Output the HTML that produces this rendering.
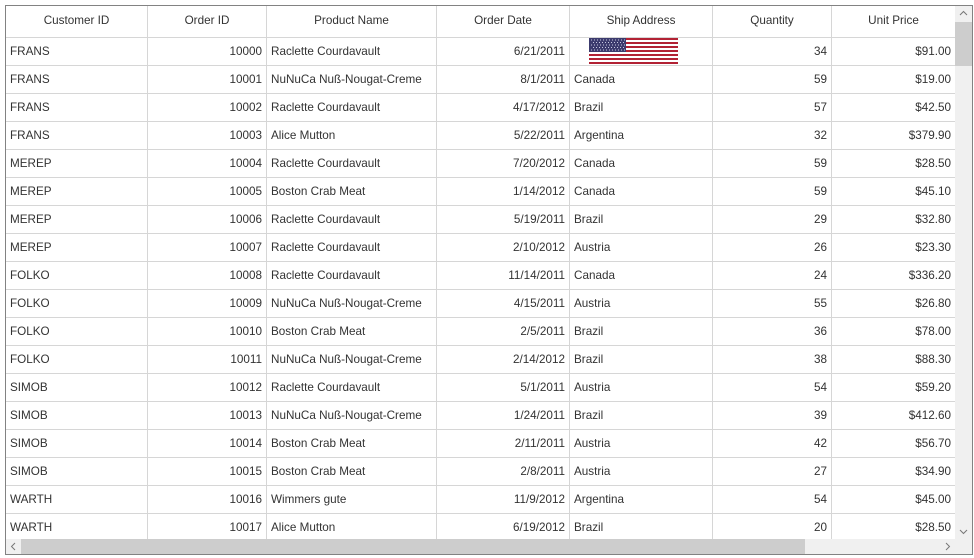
<!DOCTYPE html>
<html><head><style>
body{margin:0;background:#fff;width:974px;height:558px;overflow:hidden;font-family:"Segoe UI","Liberation Sans",sans-serif;font-size:11.7px;color:#333}
#box{position:absolute;left:5px;top:5px;width:966px;height:548px;border:1px solid #828282;overflow:hidden}
.c{position:absolute;height:28px;line-height:27px;white-space:nowrap;overflow:hidden;box-sizing:border-box;border-right:1px solid #d6d6d6;border-bottom:1px solid #d6d6d6;padding:0 4px}
.h{height:32px;line-height:30px;text-align:center}
.r{text-align:right}
#vs{position:absolute;left:949px;top:0;width:17px;height:533px;background:#f0f0f0}
#hs{position:absolute;left:0;top:533px;width:949px;height:15px;background:#f0f0f0}
#corner{position:absolute;left:949px;top:533px;width:17px;height:15px;background:#f0f0f0}
.ar{position:absolute}
</style></head><body><div id="box">
<div id="g"></div>
<div id="vs"><div style="position:absolute;left:0;top:16px;width:17px;height:44px;background:#cdcdcd"></div>
<svg class="ar" style="left:4px;top:4px" width="9" height="6"><path d="M1 5L4.5 1.5L8 5" fill="none" stroke="#777"/></svg>
<svg class="ar" style="left:4px;bottom:4px" width="9" height="6"><path d="M1 1L4.5 4.5L8 1" fill="none" stroke="#777"/></svg></div>
<div id="hs"><div style="position:absolute;left:15px;top:0;width:784px;height:15px;background:#cdcdcd"></div>
<svg class="ar" style="left:4px;top:3px" width="6" height="9"><path d="M5 1L1.5 4.5L5 8" fill="none" stroke="#777"/></svg>
<svg class="ar" style="left:939px;top:3px" width="6" height="9"><path d="M1 1L4.5 4.5L1 8" fill="none" stroke="#777"/></svg></div>
<div id="corner"></div>
</div>
<script>
var X=[0,142,261,431,564,707,826,950];
var H=["Customer ID","Order ID","Product Name","Order Date","Ship Address","Quantity","Unit Price"];
var R="FRANS 10000 Raclette Courdavault 6/21/2011 - 34 $91.00|FRANS 10001 NuNuCa Nuß-Nougat-Creme 8/1/2011 Canada 59 $19.00|FRANS 10002 Raclette Courdavault 4/17/2012 Brazil 57 $42.50|FRANS 10003 Alice Mutton 5/22/2011 Argentina 32 $379.90|MEREP 10004 Raclette Courdavault 7/20/2012 Canada 59 $28.50|MEREP 10005 Boston Crab Meat 1/14/2012 Canada 59 $45.10|MEREP 10006 Raclette Courdavault 5/19/2011 Brazil 29 $32.80|MEREP 10007 Raclette Courdavault 2/10/2012 Austria 26 $23.30|FOLKO 10008 Raclette Courdavault 11/14/2011 Canada 24 $336.20|FOLKO 10009 NuNuCa Nuß-Nougat-Creme 4/15/2011 Austria 55 $26.80|FOLKO 10010 Boston Crab Meat 2/5/2011 Brazil 36 $78.00|FOLKO 10011 NuNuCa Nuß-Nougat-Creme 2/14/2012 Brazil 38 $88.30|SIMOB 10012 Raclette Courdavault 5/1/2011 Austria 54 $59.20|SIMOB 10013 NuNuCa Nuß-Nougat-Creme 1/24/2011 Brazil 39 $412.60|SIMOB 10014 Boston Crab Meat 2/11/2011 Austria 42 $56.70|SIMOB 10015 Boston Crab Meat 2/8/2011 Austria 27 $34.90|WARTH 10016 Wimmers gute 11/9/2012 Argentina 54 $45.00|WARTH 10017 Alice Mutton 6/19/2012 Brazil 20 $28.50".split("|");
var s="";
for(var j=0;j<7;j++)s+='<div class="c h" style="left:'+X[j]+'px;top:0;width:'+(X[j+1]-X[j])+'px">'+H[j]+'</div>';
var fl='<svg width="89" height="26" style="position:absolute;left:19px;top:0" viewBox="0 0 89 26"><rect width="89" height="26" fill="#fff"/>';
for(var k=0;k<13;k+=2)fl+='<rect y="'+(k*2)+'" width="89" height="2" fill="#b22234"/>';
fl+='<rect width="37" height="14" fill="#3c3b6e"/><path d="M2 2h34M4 4.5h32M2 7h34M4 9.5h32M2 12h34" stroke="#c8c8e0" stroke-width="1" stroke-dasharray="1 2"/></svg>';
R.forEach(function(l,i){
 var m=l.match(/^(\S+) (\S+) (.+) (\S+) (\S+) (\S+) (\S+)$/);var v=m.slice(1);
 var t=32+28*i;
 for(var j=0;j<7;j++){
  var al=(j==1||j==3||j==5||j==6)?' r':'';
  var txt=v[j];
  if(j==4&&txt=="-")txt=fl;
  s+='<div class="c'+al+'" style="left:'+X[j]+'px;top:'+t+'px;width:'+(X[j+1]-X[j])+'px">'+txt+'</div>';
 }
});
document.getElementById('g').innerHTML=s;
</script>
</body></html>
